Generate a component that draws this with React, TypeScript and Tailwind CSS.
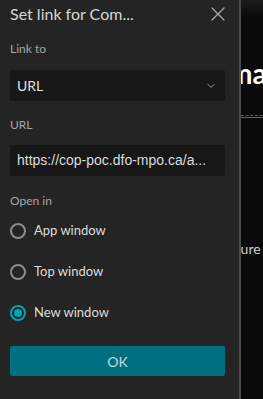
import { X, ChevronDown } from 'lucide-react';

const options = [
  { label: 'App window', checked: false },
  { label: 'Top window', checked: false },
  { label: 'New window', checked: true },
];

function Radio({ checked }: { checked: boolean }) {
  if (checked) {
    return (
      <span className="flex h-[16px] w-[16px] items-center justify-center rounded-full border-2 border-[#00a3b4]">
        <span className="h-[8px] w-[8px] rounded-full bg-[#00a3b4]" />
      </span>
    );
  }
  return <span className="h-[16px] w-[16px] rounded-full border-2 border-[#8c8c8c]" />;
}

export default function App() {
  return (
    <div className="flex h-[399px] w-[263px] overflow-hidden bg-[#0a0a0a] font-['Lato',sans-serif]">
      <div className="z-10 flex w-[241px] shrink-0 flex-col border-r-2 border-[#4a4a4a] bg-[#242424] px-[10px]">
        <div className="flex h-[28px] items-center justify-between">
          <h2 className="text-[16px] text-[#d6d6d6]">Set link for Com...</h2>
          <X className="mr-[-1px] h-[24px] w-[24px] text-[#a8a8a8]" strokeWidth={1.25} />
        </div>

        <p className="mt-[13px] text-[12px] leading-[16px] text-[#a6a6a6]">Link to</p>
        <div className="mt-[13px] flex h-[31px] w-[215px] items-center justify-between rounded-[2px] bg-[#171717] pl-[7px] pr-[8px]">
          <span className="text-[14px] text-[#e0e0e0]">URL</span>
          <ChevronDown className="h-[12px] w-[12px] text-[#9a9a9a]" strokeWidth={2} />
        </div>

        <p className="mt-[16px] text-[12px] leading-[16px] text-[#a6a6a6]">URL</p>
        <div className="mt-[12px] flex h-[31px] w-[215px] items-center rounded-[2px] bg-[#171717] px-[7px]">
          <span className="truncate font-['Liberation_Sans',sans-serif] text-[14px] text-[#dcdcdc]">
            https://cop-poc.dfo-mpo.ca/a...
          </span>
        </div>

        <p className="mt-[17px] text-[12px] leading-[16px] text-[#a6a6a6]">Open in</p>
        <div className="mt-[12px] flex flex-col gap-[21px]">
          {options.map((o) => (
            <label key={o.label} className="flex h-[20px] items-center gap-[8px]">
              <Radio checked={o.checked} />
              <span className="text-[13px] text-[#dcdcdc]">{o.label}</span>
            </label>
          ))}
        </div>

        <button className="mt-[23px] h-[30px] w-[215px] rounded-[2px] bg-[#007080] text-[14px] text-[#c4dade]">
          OK
        </button>
      </div>

      <div className="relative flex-1 bg-[linear-gradient(to_bottom,#1c1c1c_0px,#0a0a0a_16px)]">
        <div className="-ml-[12px] mt-[56px] whitespace-nowrap text-[28px] font-bold leading-[34px] text-white">
          ma
        </div>
        <div className="mt-[25px] border-t border-dashed border-[#5a5a5a]" />
        <div className="mt-[1px] h-[1px] bg-[#0a8a99]" />
        <div className="-ml-[27px] mt-[120px] whitespace-nowrap text-[14px] text-[#cfcfcf]">Feature</div>
      </div>
    </div>
  );
}
